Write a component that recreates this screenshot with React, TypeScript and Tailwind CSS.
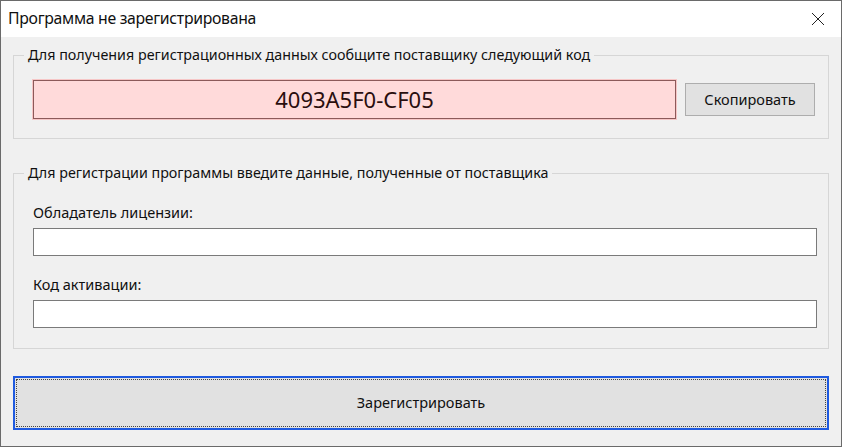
import React from "react";

export default function App() {
  const font = { fontFamily: '"Noto Sans", "Open Sans", sans-serif' };
  return (
    <div
      className="w-[842px] h-[447px] flex flex-col bg-[#f0f0f0] border border-[#6a6a6a] overflow-hidden text-[#101010]"
      style={font}
    >
      {/* Title bar */}
      <div className="h-[36px] bg-white flex items-center justify-between pl-[7px] pr-[14px] shrink-0">
        <span className="text-[15.8px] tracking-[-0.3px]">Программа не зарегистрирована</span>
        <svg width="14" height="14" viewBox="0 0 14 14" className="mr-[2px]">
          <path d="M1 1 L13 13 M13 1 L1 13" stroke="#222" strokeWidth="1" fill="none" />
        </svg>
      </div>

      <div className="flex flex-col pl-[12px] pr-[12px] pt-[8px]">
        {/* Group 1 */}
        <fieldset className="border border-[#d6d6d6] pl-[19px] pr-[12px] pt-[15px] pb-[19px] m-0">
          <legend className="-ml-[9px] px-[4px] text-[14.3px] leading-[20px]">
            Для получения регистрационных данных сообщите поставщику следующий код
          </legend>
          <div className="flex items-center">
            <div className="w-[643px] h-[39px] border border-[#8c5a5a] ring-1 ring-[#f6c6c6] bg-[#ffdada] flex items-center justify-center">
              <span className="text-[22px] text-[#2a0e0e] tracking-[0px]">4093A5F0-CF05</span>
            </div>
            <button className="ml-[9px] w-[130px] h-[33px] bg-[#e1e1e1] border border-[#adadad] text-[14.5px] flex items-center justify-center">
              Скопировать
            </button>
          </div>
        </fieldset>

        {/* Group 2 */}
        <fieldset className="mt-[24px] border border-[#d6d6d6] pl-[19px] pr-[11px] pt-[19px] pb-[20px] m-0">
          <legend className="-ml-[9px] px-[4px] text-[14.3px] leading-[20px]">
            Для регистрации программы введите данные, полученные от поставщика
          </legend>
          <div className="flex flex-col">
            <label className="text-[14.5px] leading-[20px]">Обладатель лицензии:</label>
            <input className="mt-[6px] h-[28px] bg-white border border-[#7a7a7a] outline-none" />
            <label className="mt-[18px] text-[14.5px] leading-[20px]">Код активации:</label>
            <input className="mt-[6px] h-[28px] bg-white border border-[#7a7a7a] outline-none" />
          </div>
        </fieldset>

        {/* Register button */}
        <button className="mt-[27px] h-[54px] border-2 border-[#1f5ae0] bg-[#e1e1e1] p-[1px] flex">
          <div className="flex-1 border border-dotted border-[#444] flex items-center justify-center text-[14.5px]">
            Зарегистрировать
          </div>
        </button>
      </div>
    </div>
  );
}
